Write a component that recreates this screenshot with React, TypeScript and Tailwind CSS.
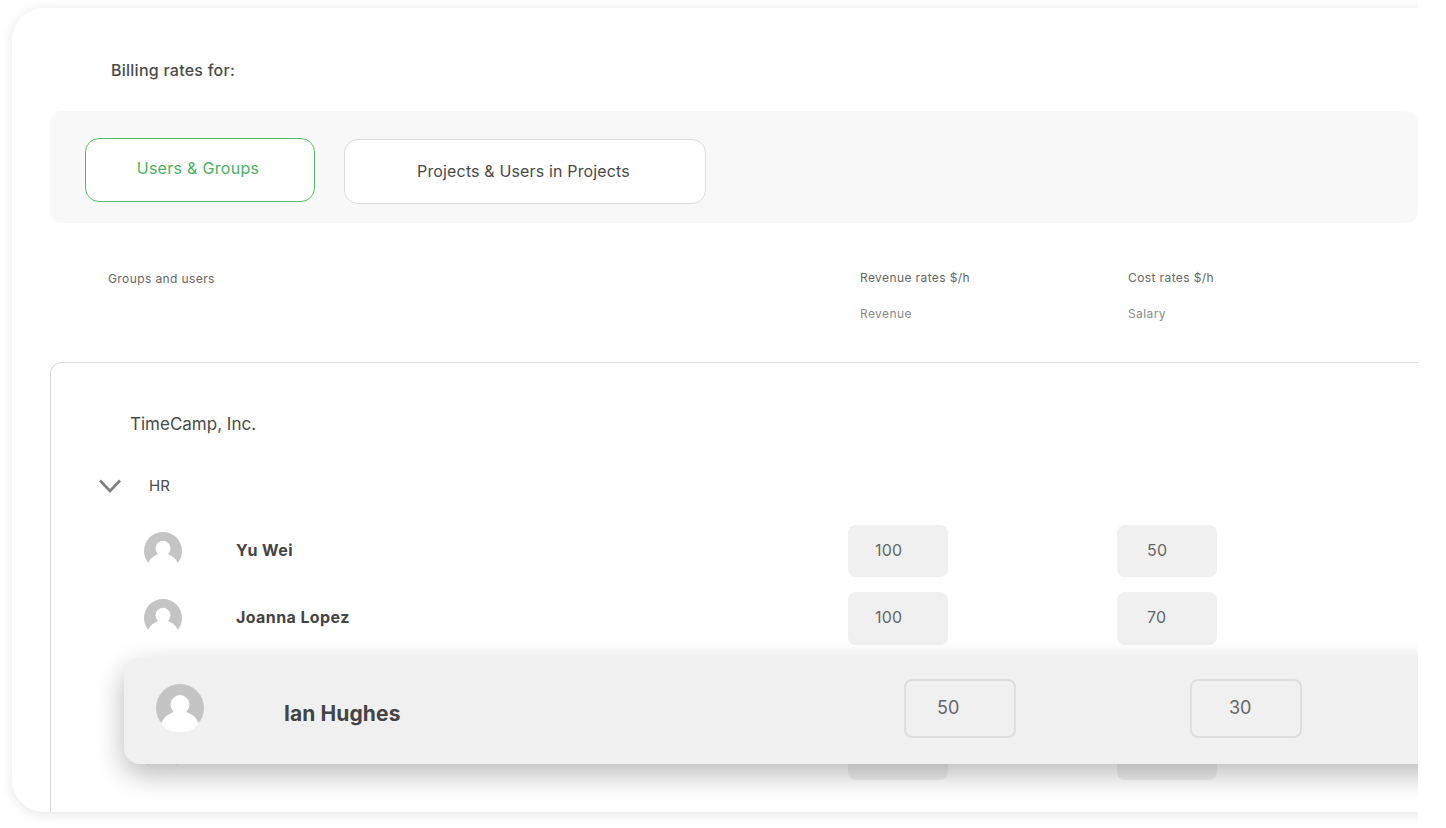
const font = "font-['Inter','Liberation_Sans',sans-serif]";

interface Member {
  name: string;
  revenue: number;
  cost: number;
}

const members: Member[] = [
  { name: "Yu Wei", revenue: 100, cost: 50 },
  { name: "Joanna Lopez", revenue: 100, cost: 70 },
  { name: "Mark Evans", revenue: 80, cost: 40 },
  { name: "Anna Brown", revenue: 60, cost: 30 },
];

function Avatar({ className }: { className: string }) {
  return (
    <svg viewBox="0 0 48 48" className={className} aria-hidden="true">
      <defs>
        <clipPath id="avatar-clip">
          <circle cx="24" cy="24" r="24.6" />
        </clipPath>
      </defs>
      <circle cx="24" cy="24" r="24" fill="#c4c4c4" />
      <g clipPath="url(#avatar-clip)">
        <circle cx="24" cy="20.6" r="9.5" fill="#fff" />
        <ellipse cx="24" cy="46" rx="20" ry="19" fill="#fff" />
      </g>
    </svg>
  );
}

function RateBox({ value, pad }: { value: number; pad: string }) {
  return (
    <div className={`flex h-[52.4px] w-[100px] items-center rounded-lg bg-[#f0f0f0] pb-[3px] text-[16px] tracking-[0.2px] text-[#666] ${pad}`}>
      {value}
    </div>
  );
}

function MemberRow({ member }: { member: Member }) {
  return (
    <div className="flex h-[52.4px] items-center pl-[93px]">
      <div className="w-[92px] pb-[1px]">
        <Avatar className="h-[38px] w-[38px]" />
      </div>
      <div className="w-[612px] pb-[3px] text-[16px] font-bold tracking-[0.4px] text-[#444]">{member.name}</div>
      <div className="w-[269px]">
        <RateBox value={member.revenue} pad="pl-[27px]" />
      </div>
      <RateBox value={member.cost} pad="pl-[30px]" />
    </div>
  );
}

export default function App() {
  return (
    <div className={`${font} h-[828px] w-[1418px] overflow-hidden bg-white`}>
      <div className="pl-3 pt-2">
        <main className="relative h-[804px] w-[1500px] rounded-l-[32px] bg-white shadow-[0_2px_14px_rgba(0,0,0,0.1)]">
          <div className="pl-[99px] pt-[52px] text-[16px] leading-5 font-medium tracking-[0.25px] text-[#4a4a4a]">
            Billing rates for:
          </div>

          <div className="ml-[38px] mt-[31px] flex h-[112px] w-[1368px] gap-[29px] rounded-xl bg-[#f8f8f8] pl-[35px] pt-[27px]">
            <button className="h-[64px] w-[230px] rounded-[14px] border border-[#5cb870] bg-white pb-[5px] pr-[4px] text-[16px] tracking-[0.3px] text-[#4caf62]">
              Users &amp; Groups
            </button>
            <button className="mt-[1px] h-[65px] w-[362px] rounded-[14px] border border-[#dcdcdc] bg-white pb-[2px] pr-[3px] text-[16px] tracking-[0.15px] text-[#4a4a4a]">
              Projects &amp; Users in Projects
            </button>
          </div>

          <div className="flex pt-[47px] text-[12px] leading-4 tracking-[0.4px] text-[#666]">
            <div className="w-[848px] pl-[96px] pt-[1px]">Groups and users</div>
            <div className="w-[268px]">
              <div>Revenue rates $/h</div>
              <div className="mt-5 text-[#8a8a8a]">Revenue</div>
            </div>
            <div>
              <div>Cost rates $/h</div>
              <div className="mt-5 text-[#8a8a8a]">Salary</div>
            </div>
          </div>

          <section className="ml-[38px] mt-[40px] h-[450px] rounded-tl-xl border-l border-t border-[#dcdcdc]">
            <div className="pl-[79px] pt-[49px] text-[17px] leading-6 text-[#4a4a4a]">TimeCamp, Inc.</div>
            <div className="mt-[38px] flex h-6 items-center pl-[48px]">
              <svg viewBox="0 0 22 14" className="h-[14px] w-[22px]" fill="none" stroke="#808080" strokeWidth="2.6" aria-hidden="true">
                <path d="M1 1.5 11 12 21 1.5" />
              </svg>
              <span className="pl-[28px] text-[15px] text-[#4a4a4a]">HR</span>
            </div>
            <div className="mt-[27px] flex flex-col gap-[15px]">
              {members.map((m) => (
                <MemberRow key={m.name} member={m} />
              ))}
            </div>
          </section>

          {/* dragged row */}
          <div className="absolute left-[112px] top-[650px] flex h-[106px] w-[1388px] items-center rounded-l-2xl bg-[#f0f0f0] pl-[32px] shadow-[0_10px_28px_rgba(0,0,0,0.28)]">
            <div className="w-[128px] pb-[6px]">
              <Avatar className="h-[48px] w-[48px]" />
            </div>
            <div className="w-[620px] pt-[6px] text-[21px] font-bold tracking-[0.1px] text-[#444]">Ian Hughes</div>
            <div className="w-[286px] pb-[6px]">
              <div className="flex h-[59px] w-[112px] items-center rounded-lg border-2 border-[#dedede] pb-[2px] pl-[31px] text-[18px] text-[#666]">50</div>
            </div>
            <div className="pb-[6px]">
              <div className="flex h-[59px] w-[112px] items-center rounded-lg border-2 border-[#dedede] pb-[2px] pl-[37px] text-[18px] text-[#666]">30</div>
            </div>
          </div>
        </main>
      </div>
    </div>
  );
}
